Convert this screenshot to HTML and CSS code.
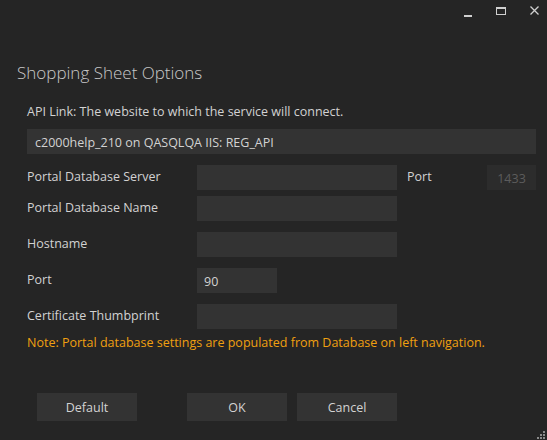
FILE: index.html
```html
<!DOCTYPE html>
<html lang="en">
<head>
    <meta charset="UTF-8">
    <title>Shopping Sheet Options</title>
    <link rel="stylesheet" href="styles.css">
</head>
<body>
    <div class="window">
        <div class="titlebar">
            <span class="ctrl ctrl-min"></span>
            <span class="ctrl ctrl-max"></span>
            <span class="ctrl ctrl-close">
                <svg width="9" height="9" viewBox="0 0 9 9"><path d="M0.5 0.5 L8.5 8.5 M8.5 0.5 L0.5 8.5" stroke="#d0d0d0" stroke-width="1.3"/></svg>
            </span>
        </div>

        <h1 class="title">Shopping Sheet Options</h1>

        <div class="content">
            <p class="hint">API Link: The website to which the service will connect.</p>
            <input class="field api-link" type="text" value="c2000help_210 on QASQLQA IIS: REG_API">

            <div class="row row-first">
                <label class="label">Portal Database Server</label>
                <input class="field wide" type="text">
                <label class="label port-label">Port</label>
                <input class="field port-small" type="text" value="1433" disabled>
            </div>
            <div class="row row-tight">
                <label class="label">Portal Database Name</label>
                <input class="field wide" type="text">
            </div>
            <div class="row">
                <label class="label">Hostname</label>
                <input class="field wide" type="text">
            </div>
            <div class="row">
                <label class="label">Port</label>
                <input class="field short" type="text" value="90">
            </div>
            <div class="row">
                <label class="label">Certificate Thumbprint</label>
                <input class="field wide" type="text">
            </div>

            <p class="note">Note: Portal database settings are populated from Database on left navigation.</p>
        </div>

        <div class="buttons">
            <button class="btn btn-default">Default</button>
            <button class="btn">OK</button>
            <button class="btn">Cancel</button>
        </div>

        <svg class="grip" width="10" height="10" viewBox="0 0 10 10">
            <rect x="8" y="2" width="2" height="2" fill="#8a8a8a"/>
            <rect x="5" y="5" width="2" height="2" fill="#8a8a8a"/>
            <rect x="8" y="5" width="2" height="2" fill="#8a8a8a"/>
            <rect x="2" y="8" width="2" height="2" fill="#8a8a8a"/>
            <rect x="5" y="8" width="2" height="2" fill="#8a8a8a"/>
            <rect x="8" y="8" width="2" height="2" fill="#8a8a8a"/>
        </svg>
    </div>
</body>
</html>
```

FILE: styles.css
```css
html, body {
    margin: 0;
    padding: 0;
    background-color: #252525;
}
body {
    font-family: "Open Sans", "Noto Sans", sans-serif;
    font-size: 12.5px;
    color: #d2d2d2;
}
.window {
    position: relative;
    width: 547px;
    height: 440px;
    overflow: hidden;
}
.titlebar {
    display: flex;
    justify-content: flex-end;
    align-items: center;
    height: 20px;
    padding-right: 8px;
}
.ctrl {
    display: flex;
    align-items: center;
    justify-content: center;
    width: 9px;
    height: 9px;
    margin-left: 24px;
}
.ctrl-min {
    height: 2px;
    width: 8px;
    background-color: #d0d0d0;
    margin-top: 12px;
}
.ctrl-max {
    box-sizing: border-box;
    border: 1px solid #d0d0d0;
    border-top-width: 2px;
    width: 10px;
    height: 8px;
    margin-top: 1px;
}
.ctrl-close {
    margin-top: 1px;
}
.title {
    margin: 42px 0 0 17px;
    font-size: 17px;
    font-weight: 300;
    color: #c8c8c8;
    line-height: 22px;
}
.content {
    padding: 0 11px 0 27px;
}
.hint {
    margin: 19px 0 0 0;
    line-height: 18px;
}
.field {
    box-sizing: border-box;
    height: 25px;
    border: none;
    outline: none;
    background-color: #333333;
    color: #d2d2d2;
    font-family: inherit;
    font-size: 12.5px;
    padding: 2px 7px 0 7px;
}
.api-link {
    display: block;
    width: 509px;
    margin-top: 8px;
    padding-left: 8px;
}
.row {
    display: flex;
    align-items: center;
    height: 25px;
    margin-top: 11px;
}
.row-first {
    margin-top: 11px;
}
.row-tight {
    margin-top: 6px;
}
.label {
    width: 170px;
    flex-shrink: 0;
    margin-top: -3px;
}
.port-label {
    width: 80px;
    padding-left: 10px;
}
.wide {
    width: 200px;
}
.short {
    width: 80px;
}
.port-small {
    width: 49px;
    background-color: #2c2c2c;
    color: #5c5c5c;
    text-align: center;
}
.note {
    margin: 5px 0 0 0;
    color: #f0a010;
    line-height: 18px;
}
.buttons {
    display: flex;
    padding-left: 37px;
    margin-top: 41px;
}
.btn {
    width: 100px;
    height: 28px;
    border: none;
    background-color: #333333;
    color: #d2d2d2;
    font-family: inherit;
    font-size: 12.5px;
    margin-right: 10px;
}
.btn-default {
    margin-right: 50px;
}
.grip {
    position: absolute;
    right: 2px;
    bottom: 1px;
}
```
